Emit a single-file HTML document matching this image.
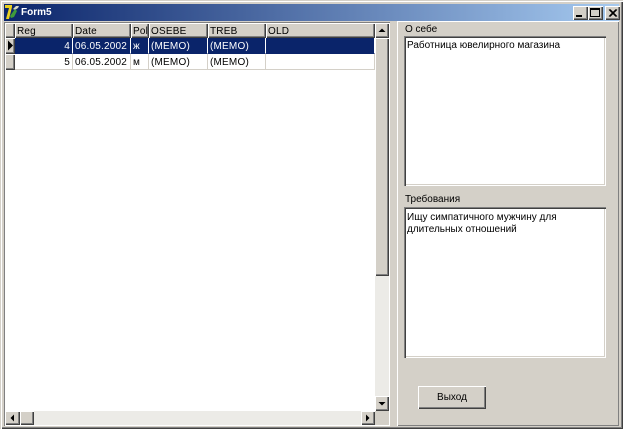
<!DOCTYPE html>
<html><head><meta charset="utf-8"><style>
html,body{margin:0;padding:0;background:#d4d0c8}
#w{position:relative;width:623px;height:429px;overflow:hidden;background:#d4d0c8;font:10px "Liberation Sans",sans-serif;color:#000;filter:blur(.3px)}
#w div{position:absolute;box-sizing:border-box}
.r{box-shadow:inset 1px 1px 0 #fff,inset -1px -1px 0 #404040,inset -2px -2px 0 #808080;background:#d4d0c8}
.t{white-space:nowrap;line-height:13px}
.hc{top:23px;height:15px;padding:2px 0 0 2px;line-height:13px;white-space:nowrap;letter-spacing:.2px}
.c{height:16px;line-height:15px;white-space:nowrap;padding:1px 0 0 2px;border-right:1px solid #d4d0c8;border-bottom:1px solid #d4d0c8;letter-spacing:.2px}
.sel{color:#fff;background:#0a246a;border-color:#0a246a #fff}
.m{background:#fff;box-shadow:inset 1px 1px 0 #808080,inset 2px 2px 0 #404040,inset -1px -1px 0 #fff,inset -2px -2px 0 #d4d0c8;padding:3px 3px;line-height:13px}
svg{position:absolute;display:block}
</style></head><body><div id="w">
<div style="left:0;top:0;width:623px;height:429px;box-shadow:inset 1px 1px 0 #d4d0c8,inset 2px 2px 0 #fff,inset -1px -1px 0 #404040,inset -2px -2px 0 #808080"></div>
<div style="left:4px;top:4px;width:615px;height:17px;background:linear-gradient(90deg,#0a246a,#a6caf0)"></div>
<svg style="left:4px;top:4px" width="17" height="17" viewBox="0 0 17 17"><path d="M1 1h7v2l-3 12H2l3-11H1z" fill="#e8d020"/><path d="M9 5l3-3 3 0-1 2-3 2z" fill="#d8d8c0"/><path d="M6 12l5-7 2 2-3 6-3 1z" fill="#3f9a3a"/></svg>
<div class="t" style="left:21px;top:6px;color:#fff;font-weight:bold;font-size:10px">Form5</div>
<div class="r" style="left:573px;top:6px;width:15px;height:14px"></div>
<div style="left:576px;top:15px;width:6px;height:2px;background:#000"></div>
<div class="r" style="left:588px;top:6px;width:15px;height:14px"></div>
<div style="left:590px;top:8px;width:10px;height:9px;border:1px solid #000;border-top-width:2px"></div>
<div class="r" style="left:605px;top:6px;width:15px;height:14px"></div>
<svg style="left:605px;top:6px" width="15" height="14"><path d="M4 3.5l7 7M5 3.5l7 7M11 3.5l-7 7M12 3.5l-7 7" stroke="#000" stroke-width="1"/></svg>

<!-- grid -->
<div style="left:4px;top:22px;width:386px;height:404px;background:#fff;box-shadow:inset 1px 1px 0 #808080,inset -1px -1px 0 #fff"></div>
<div class="r hc" style="left:5px;width:10px"></div>
<div class="r hc" style="left:15px;width:58px">Reg</div>
<div class="r hc" style="left:73px;width:58px">Date</div>
<div class="r hc" style="left:131px;width:18px">Pol</div>
<div class="r hc" style="left:149px;width:59px">OSEBE</div>
<div class="r hc" style="left:208px;width:58px">TREB</div>
<div class="r hc" style="left:266px;width:109px">OLD</div>

<div class="r" style="left:5px;top:38px;width:10px;height:16px"></div>
<svg style="left:5px;top:38px" width="10" height="16"><path d="M3 2.5v10l5-5z" fill="#000"/></svg>
<div class="r" style="left:5px;top:54px;width:10px;height:16px"></div>

<div class="c sel" style="left:15px;top:38px;width:58px;text-align:right;padding-right:2px">4</div>
<div class="c sel" style="left:73px;top:38px;width:58px">06.05.2002</div>
<div class="c sel" style="left:131px;top:38px;width:18px">ж</div>
<div class="c sel" style="left:149px;top:38px;width:59px">(MEMO)</div>
<div class="c sel" style="left:208px;top:38px;width:58px">(MEMO)</div>
<div class="c sel" style="left:266px;top:38px;width:109px"></div>

<div class="c" style="left:15px;top:54px;width:58px;text-align:right;padding-right:2px">5</div>
<div class="c" style="left:73px;top:54px;width:58px">06.05.2002</div>
<div class="c" style="left:131px;top:54px;width:18px">м</div>
<div class="c" style="left:149px;top:54px;width:59px">(MEMO)</div>
<div class="c" style="left:208px;top:54px;width:58px">(MEMO)</div>
<div class="c" style="left:266px;top:54px;width:109px"></div>

<!-- v scroll -->
<div style="left:375px;top:23px;width:14px;height:388px;background:#ecebe7"></div>
<div class="r" style="left:375px;top:23px;width:14px;height:15px"></div>
<svg style="left:375px;top:23px" width="14" height="15"><path d="M3.5 9h7L7 5.5z" fill="#000"/></svg>
<div class="r" style="left:375px;top:38px;width:14px;height:238px"></div>
<div class="r" style="left:375px;top:396px;width:14px;height:15px"></div>
<svg style="left:375px;top:396px" width="14" height="15"><path d="M3.5 6h7L7 9.5z" fill="#000"/></svg>
<!-- h scroll -->
<div style="left:5px;top:411px;width:370px;height:14px;background:#ecebe7"></div>
<div class="r" style="left:5px;top:411px;width:15px;height:14px"></div>
<svg style="left:5px;top:411px" width="15" height="14"><path d="M9 3.5v7L5.5 7z" fill="#000"/></svg>
<div class="r" style="left:20px;top:411px;width:14px;height:14px"></div>
<div class="r" style="left:361px;top:411px;width:14px;height:14px"></div>
<svg style="left:361px;top:411px" width="14" height="14"><path d="M5 3.5v7L8.5 7z" fill="#000"/></svg>
<div style="left:375px;top:411px;width:14px;height:14px;background:#d4d0c8"></div>

<!-- right panel -->
<div style="left:397px;top:21px;width:222px;height:405px;box-shadow:inset 1px 1px 0 #fff,inset -1px -1px 0 #808080"></div>
<div class="t" style="left:405px;top:23px">О себе</div>
<div class="m" style="left:404px;top:36px;width:202px;height:150px;padding-top:3px">Работница ювелирного магазина</div>
<div class="t" style="left:405px;top:193px">Требования</div>
<div class="m" style="left:404px;top:207px;width:202px;height:151px;line-height:12px;padding-top:5px">Ищу симпатичного мужчину для<br>длительных отношений</div>
<div class="r" style="left:418px;top:386px;width:68px;height:23px;text-align:center;line-height:23px">Выход</div>
</div></body></html>
